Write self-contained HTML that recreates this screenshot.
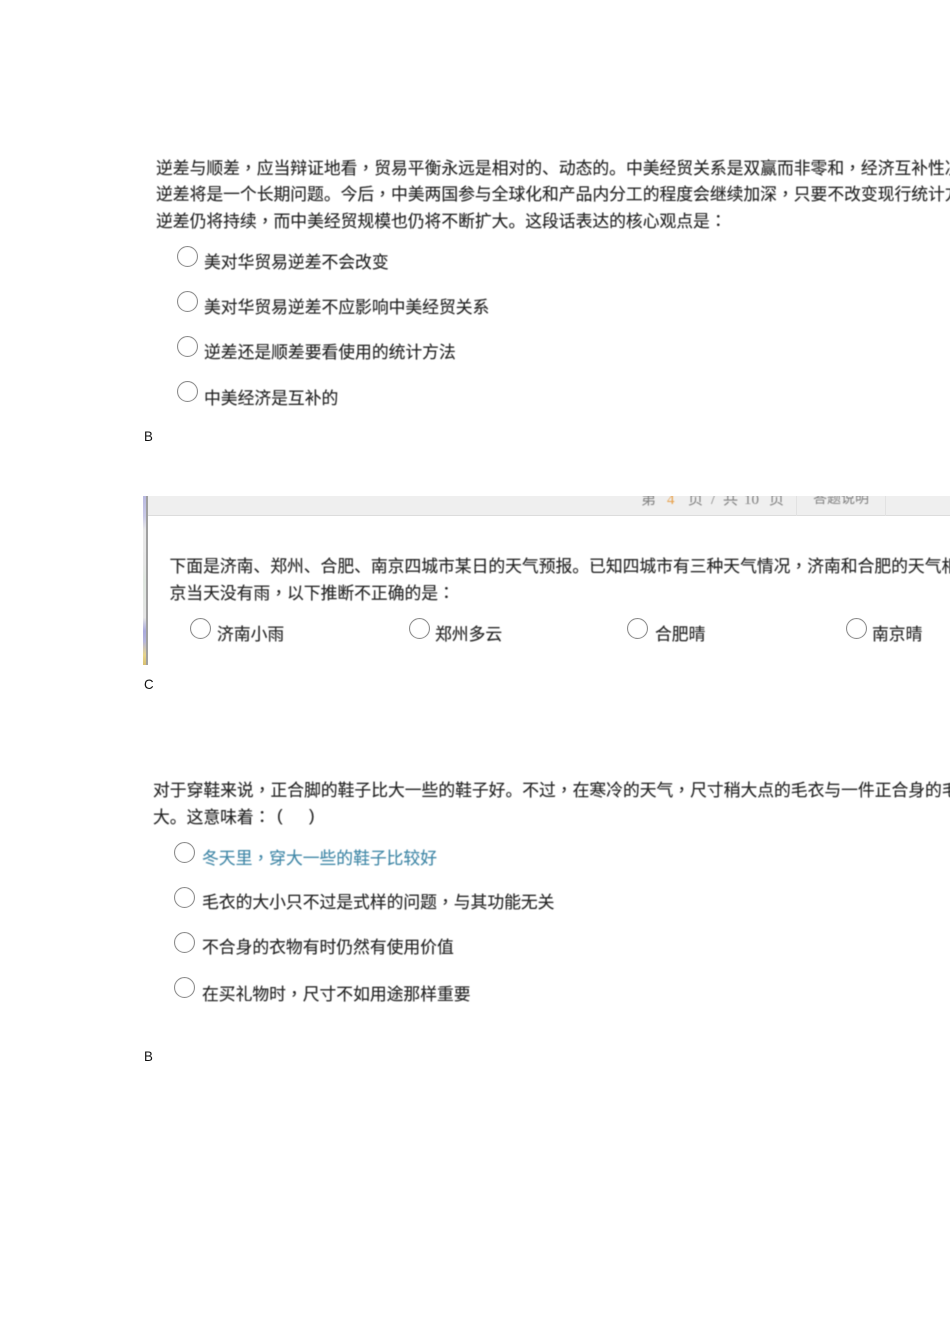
<!DOCTYPE html>
<html>
<head>
<meta charset="utf-8">
<style>
html,body{margin:0;padding:0;background:#fff}
#p{position:relative;width:950px;height:1344px;overflow:hidden;background:#fff}
.t{position:absolute;white-space:nowrap;font-family:"Liberation Sans","Noto Sans CJK SC",sans-serif;font-size:16.8px;line-height:26px;height:26px;color:#222;-webkit-text-stroke:.12px #222;filter:blur(.4px)}
.t i{font-style:normal;font-family:"Noto Sans CJK TC",sans-serif}
.r{position:absolute;width:21px;height:21px;margin-top:.5px;border:1.3px solid #8a8a8a;border-radius:50%;box-sizing:border-box;background:#fff;filter:blur(.35px);box-shadow:inset 0 0 1px #ccc}
.a{position:absolute;left:144px;font-family:"Liberation Sans",sans-serif;font-size:14px;line-height:16px;color:#111;transform:scaleX(.95);transform-origin:left}
#shot{position:absolute;left:143px;top:496px;width:807px;height:169px;overflow:hidden;background:#fff}
#edge{position:absolute;left:0;top:0;width:3px;height:169px;background:linear-gradient(180deg,#b9b9e0 0,#c9c9e6 12%,#e8e8e8 20%,#e6e6e6 40%,#dfe6df 50%,#e4e4e4 72%,#a9a9dd 80%,#b5b5dc 86%,#e8d68c 94%,#d9c070 100%)}
#edge2{position:absolute;left:3px;top:0;width:2px;height:169px;background:#a0a0a0}
#bar{position:absolute;left:5px;top:0;right:0;height:19px;background:#efefef;border-bottom:1px solid #dcdcdc}
.s{position:absolute;top:0;width:1px;height:20px;background:#e2e2e2}
.b{position:absolute;top:-8px;white-space:nowrap;font-family:"Liberation Serif","Noto Sans CJK SC",serif;font-size:15px;line-height:24px;color:#808080;filter:blur(.4px)}
</style>
</head>
<body>
<div id="p">
<div class="t" style="left:156px;top:154px">逆差与顺差<i lang="zh-TW">，</i>应当辩证地看<i lang="zh-TW">，</i>贸易平衡永远是相对的、动态的。中美经贸关系是双赢而非零和<i lang="zh-TW">，</i>经济互补性决定</div>
<div class="t" style="left:156px;top:180px">逆差将是一个长期问题。今后<i lang="zh-TW">，</i>中美两国参与全球化和产品内分工的程度会继续加深<i lang="zh-TW">，</i>只要不改变现行统计方法</div>
<div class="t" style="left:156px;top:207px">逆差仍将持续<i lang="zh-TW">，</i>而中美经贸规模也仍将不断扩大。这段话表达的核心观点是<i lang="zh-TW">：</i></div>
<div class="r" style="left:177px;top:245px"></div><div class="t" style="left:204px;top:250px">美对华贸易逆差不会改变</div>
<div class="r" style="left:177px;top:290px"></div><div class="t" style="left:204px;top:295px">美对华贸易逆差不应影响中美经贸关系</div>
<div class="r" style="left:177px;top:335px"></div><div class="t" style="left:204px;top:340px">逆差还是顺差要看使用的统计方法</div>
<div class="r" style="left:177px;top:380px"></div><div class="t" style="left:204px;top:386px">中美经济是互补的</div>
<div class="a" style="top:428px">B</div>

<div id="shot">
<div id="edge"></div><div id="edge2"></div>
<div id="bar"></div>
<div class="b" style="left:498px">第</div>
<div class="b" style="left:524px;color:#e8a04a">4</div>
<div class="b" style="left:545px">页</div>
<div class="b" style="left:568px">/</div>
<div class="b" style="left:580px">共</div>
<div class="b" style="left:601px">10</div>
<div class="b" style="left:626px">页</div>
<div class="b" style="left:670px;font-size:14px">答题说明</div>
<div class="s" style="left:653px"></div><div class="s" style="left:742px"></div>
</div>
<div class="t" style="left:169.5px;top:552px">下面是济南、郑州、合肥、南京四城市某日的天气预报。已知四城市有三种天气情况<i lang="zh-TW">，</i>济南和合肥的天气相同</div>
<div class="t" style="left:169.5px;top:579px">京当天没有雨<i lang="zh-TW">，</i>以下推断不正确的是<i lang="zh-TW">：</i></div>
<div class="r" style="left:190px;top:617px"></div><div class="t" style="left:217px;top:622px">济南小雨</div>
<div class="r" style="left:409px;top:617px"></div><div class="t" style="left:435px;top:622px">郑州多云</div>
<div class="r" style="left:627px;top:617px"></div><div class="t" style="left:655px;top:622px">合肥晴</div>
<div class="r" style="left:846px;top:617px"></div><div class="t" style="left:872px;top:622px">南京晴</div>
<div class="a" style="top:676px">C</div>

<div class="t" style="left:153px;top:776px">对于穿鞋来说<i lang="zh-TW">，</i>正合脚的鞋子比大一些的鞋子好。不过<i lang="zh-TW">，</i>在寒冷的天气<i lang="zh-TW">，</i>尺寸稍大点的毛衣与一件正合身的毛衣</div>
<div class="t" style="left:153px;top:803px">大。这意味着<i lang="zh-TW">：</i><span style="position:absolute;left:124px;top:0">(</span><span style="position:absolute;left:156px;top:0">)</span></div>
<div class="r" style="left:174px;top:841px"></div><div class="t" style="left:202px;top:844px;color:#3f86a6;-webkit-text-stroke:.12px #3f86a6">冬天里<i lang="zh-TW">，</i>穿大一些的鞋子比较好</div>
<div class="r" style="left:174px;top:886px"></div><div class="t" style="left:202px;top:888px">毛衣的大小只不过是式样的问题<i lang="zh-TW">，</i>与其功能无关</div>
<div class="r" style="left:174px;top:931px"></div><div class="t" style="left:202px;top:934.5px">不合身的衣物有时仍然有使用价值</div>
<div class="r" style="left:174px;top:976px"></div><div class="t" style="left:202px;top:979.5px">在买礼物时<i lang="zh-TW">，</i>尺寸不如用途那样重要</div>
<div class="a" style="top:1048px">B</div>
</div>
</body>
</html>
